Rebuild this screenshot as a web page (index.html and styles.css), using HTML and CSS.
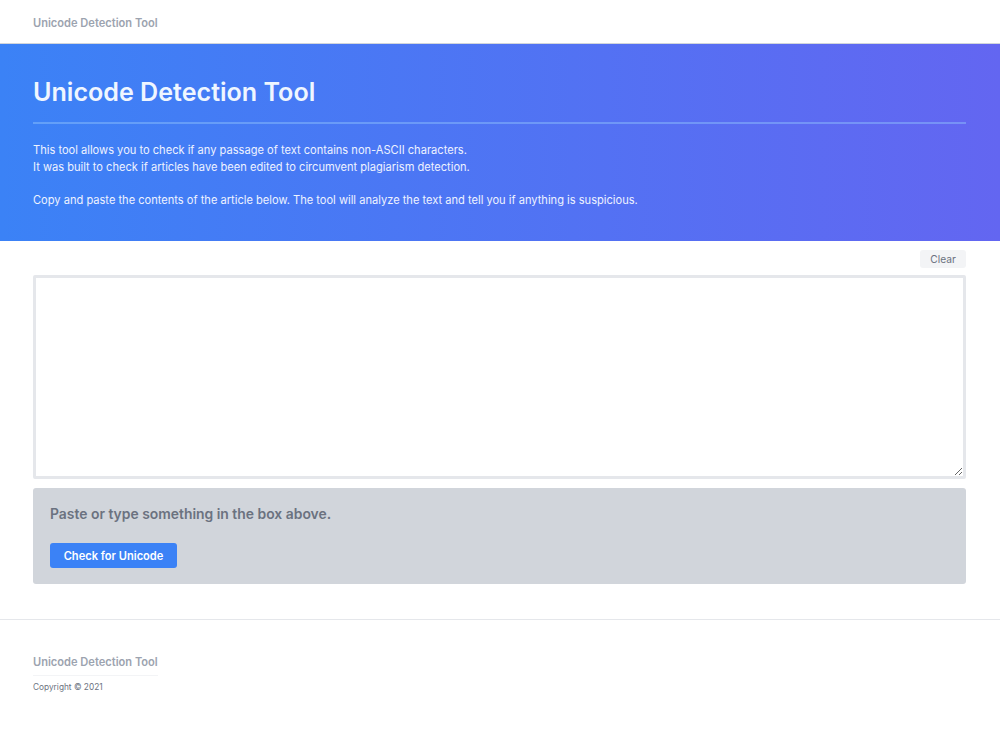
FILE: index.html
```html
<!DOCTYPE html>
<html lang="en">
<head>
<meta charset="utf-8">
<title>Unicode Detection Tool</title>
<link rel="stylesheet" href="styles.css">
</head>
<body>
<header class="topbar">
  <div class="brand">Unicode Detection Tool</div>
</header>
<section class="hero">
  <h1 class="hero-title">Unicode Detection Tool</h1>
  <div class="hero-rule"></div>
  <p class="hero-text">This tool allows you to check if any passage of text contains non-ASCII characters.<br>It was built to check if articles have been edited to circumvent plagiarism detection.</p>
  <p class="hero-text">Copy and paste the contents of the article below. The tool will analyze the text and tell you if anything is suspicious.</p>
</section>
<main class="main">
  <div class="toolbar"><button class="clear-btn">Clear</button></div>
  <textarea class="input"></textarea>
  <div class="result">
    <p class="result-text">Paste or type something in the box above.</p>
    <button class="check-btn">Check for Unicode</button>
  </div>
</main>
<footer class="footer">
  <div class="footer-inner">
    <div class="footer-title">Unicode Detection Tool</div>
    <div class="copyright">Copyright © 2021</div>
  </div>
</footer>
</body>
</html>
```
FILE: styles.css
```css
* { box-sizing: border-box; }
html, body { margin: 0; padding: 0; background: #fff; }
body { font-family: Inter, "Noto Sans", "Liberation Sans", sans-serif; color: #374151; }

.topbar {
  height: 44px;
  border-bottom: 1px solid #d1d5db;
  display: flex;
  align-items: center;
  padding: 2px 33px 0;
}
.brand { font-size: 11.1px; font-weight: 600; color: #9ca3af; }

.hero {
  background: linear-gradient(90deg, #3b82f6 0%, #6366f1 100%);
  padding: 32px 34px 33px 33px;
  color: #f3f4f6;
}
.hero-title { margin: 0; font-size: 25.1px; line-height: 32px; font-weight: 600; color: #eff6ff; }
.hero-rule { height: 2px; background: rgba(147, 197, 253, 0.45); margin-top: 14px; }
.hero-text { margin: 18px 0 0; font-size: 11.1px; line-height: 16.5px; color: #eef2ff; }
.hero-text + .hero-text { margin-top: 16.5px; }

.main { padding: 9px 34px 35px 33px; }
.toolbar { display: flex; justify-content: flex-end; }
.clear-btn {
  font-family: inherit; font-size: 10.2px; color: #6b7280;
  background: #f3f4f6; border: none; border-radius: 3px;
  height: 18px; width: 46px; padding: 0;
}
.input {
  display: block; width: 100%; height: 204px; margin-top: 7px;
  border: 3px solid #e5e7eb; border-radius: 2px; resize: vertical;
  font-family: inherit; font-size: 13px; background: #fff;
}
.result {
  margin-top: 9px; background: #d1d5db; border-radius: 3px;
  padding: 16px 17px 16px;
  display: flex; flex-direction: column; align-items: flex-start;
}
.result-text { margin: 0; font-size: 13.9px; line-height: 20px; font-weight: 600; color: #6b7280; }
.check-btn {
  margin-top: 19px; font-family: inherit; font-size: 11.1px; font-weight: 600;
  color: #fff; background: #3b82f6; border: none; border-radius: 3px;
  height: 25px; width: 127px; padding: 0;
}

.footer { border-top: 1px solid #e5e7eb; padding: 34px 33px 50px; }
.footer-inner { display: flex; flex-direction: column; width: max-content; }
.footer-title {
  font-size: 11.1px; line-height: 16px; font-weight: 600; color: #9ca3af;
  padding-bottom: 5px; border-bottom: 1px solid #f3f4f6;
}
.copyright { font-size: 8.3px; line-height: 12px; margin-top: 5px; color: #6b7280; }
```
